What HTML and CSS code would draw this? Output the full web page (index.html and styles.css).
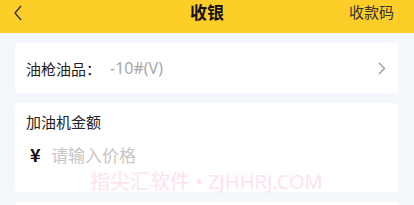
FILE: index.html
```html
<!DOCTYPE html>
<html lang="zh">
<head>
<meta charset="utf-8">
<link rel="stylesheet" href="styles.css">
</head>
<body>
<div class="page">
  <header class="nav">
    <span class="back">
      <svg width="10" height="16" viewBox="0 0 10 16"><path d="M8 1 L2 8 L8 15" fill="none" stroke="#333" stroke-width="1.4"/></svg>
    </span>
    <span class="title">收银</span>
    <span class="action">收款码</span>
  </header>
  <main class="content">
    <section class="card row">
      <span class="label">油枪油品：</span>
      <span class="value">-10#(V)</span>
      <svg class="chev" width="8" height="13" viewBox="0 0 8 13"><path d="M1 1 L6.5 6.5 L1 12" fill="none" stroke="#999" stroke-width="1.3"/></svg>
    </section>
    <section class="card amount">
      <div class="label">加油机金额</div>
      <div class="input">
        <span class="yen">¥</span>
        <span class="placeholder">请输入价格</span>
      </div>
      <div class="watermark">指尖汇软件 • ZJHHRJ.COM</div>
    </section>
    <section class="card next"></section>
  </main>
</div>
</body>
</html>
```

FILE: styles.css
```css
* { box-sizing: border-box; }
html, body { margin: 0; padding: 0; }
body {
  width: 414px;
  height: 205px;
  overflow: hidden;
  background: #f4f7fb;
  font-family: "Noto Sans CJK SC", "Noto Sans", sans-serif;
  color: #222;
}
.nav {
  height: 33px;
  background: #fdcd28;
  display: flex;
  align-items: flex-start;
  position: relative;
  padding: 4px 20px 0 13px;
}
.back { display: flex; width: 10px; height: 16px; margin-top: 1px; }
.title {
  position: absolute;
  left: 0; right: 0;
  top: 0;
  text-align: center;
  font-size: 17px;
  font-weight: 700;
  line-height: 23px;
  color: #111;
}
.action {
  margin-left: auto;
  font-size: 15px;
  color: #333;
  line-height: 16px;
}
.content {
  padding: 10px 16px 0 15px;
  display: flex;
  flex-direction: column;
  gap: 10px;
}
.card {
  background: #fff;
  border-radius: 4px;
}
.row {
  height: 50px;
  display: flex;
  align-items: center;
  padding: 0 12px 0 11px;
}
.row .label { font-size: 15px; color: #222; width: 84px; }
.row .value { font-size: 16px; color: #a8a8a8; font-family: "Noto Sans", sans-serif; }
.chev { margin-left: auto; }
.amount {
  height: 89px;
  padding: 8px 11px 0 11px;
  position: relative;
}
.amount .label { font-size: 15px; line-height: 22px; color: #222; }
.input { display: flex; align-items: center; margin-top: 9px; height: 24px; }
.yen { font-size: 18px; font-weight: 700; color: #111; margin-left: 4px; width: 21px; }
.placeholder { font-size: 17px; color: #c6c6c6; }
.watermark {
  position: absolute;
  left: 75px;
  top: 63px;
  font-size: 20px;
  color: #fde2f1;
  white-space: nowrap;
  font-family: "Noto Sans", "Noto Sans CJK SC", sans-serif;
}
.next { height: 20px; }
```
